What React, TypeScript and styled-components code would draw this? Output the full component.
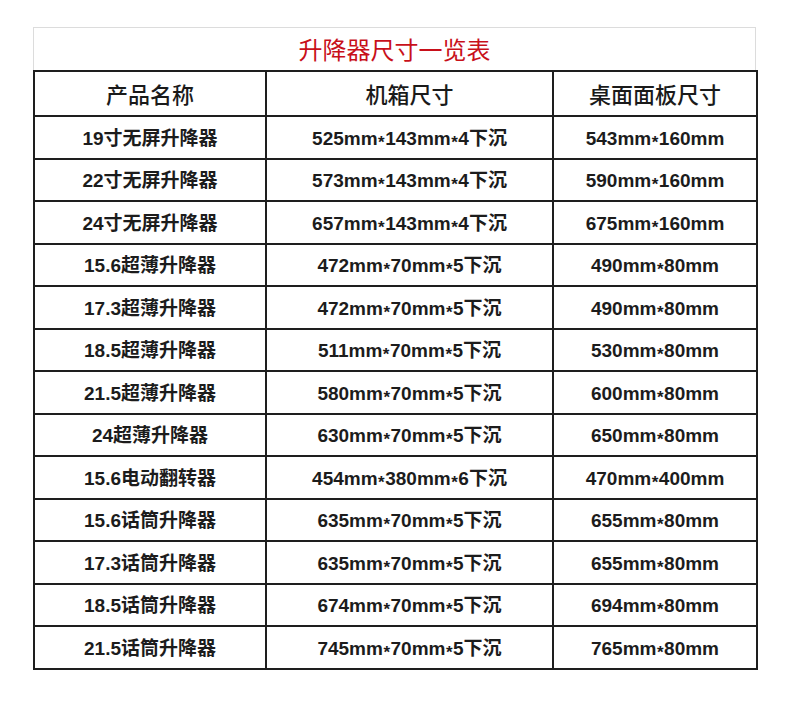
import React from "react";
import styled, { createGlobalStyle } from "styled-components";

const GlobalStyle = createGlobalStyle`
  html, body {
    margin: 0;
    padding: 0;
    background: #ffffff;
  }
  body {
    font-family: "Liberation Sans", "Noto Sans CJK SC", sans-serif;
    color: #1a1a1a;
  }
`;

const Page = styled.div`
  width: 790px;
  height: 717px;
  box-sizing: border-box;
  padding: 27px 0 0 33px;
`;

const Sheet = styled.div`
  width: 723px;
  display: flex;
  flex-direction: column;
`;

const TitleBar = styled.div`
  height: 43px;
  box-sizing: border-box;
  border: 1px solid #dcdcdc;
  border-bottom: none;
  display: flex;
  align-items: center;
  justify-content: center;
  color: #c8101a;
  font-family: "Noto Sans CJK SC", sans-serif;
  font-size: 24px;
  font-weight: 400;
  padding-bottom: 2px;
`;

const Table = styled.table`
  width: 723px;
  border-collapse: collapse;
  table-layout: fixed;
`;

const Col = styled.col<{ $w: number }>`
  width: ${(p) => p.$w}px;
`;

const HeadCell = styled.th`
  height: 41px;
  border: 2px solid #1e1e1e;
  font-family: "Noto Sans CJK SC", sans-serif;
  font-size: 22px;
  font-weight: 500;
  text-align: center;
  vertical-align: middle;
  padding: 0 0 2px 0;
  color: #1a1a1a;
`;

const Row = styled.tr`
  height: 42.5px;
`;

const Cell = styled.td`
  border: 2px solid #1e1e1e;
  font-family: "Liberation Sans", "Noto Sans CJK SC", sans-serif;
  font-size: 19px;
  line-height: 24px;
  font-weight: 700;
  text-align: center;
  vertical-align: middle;
  padding: 3px 0 0 0;
  color: #1c1c1c;
  white-space: nowrap;
`;

const Star = styled.span`
  display: inline-block;
  font-size: 17px;
  line-height: 10px;
  vertical-align: -3px;
  margin: 0 0.5px;
`;

const rows: [string, string, string][] = [
  ["19寸无屏升降器", "525mm*143mm*4下沉", "543mm*160mm"],
  ["22寸无屏升降器", "573mm*143mm*4下沉", "590mm*160mm"],
  ["24寸无屏升降器", "657mm*143mm*4下沉", "675mm*160mm"],
  ["15.6超薄升降器", "472mm*70mm*5下沉", "490mm*80mm"],
  ["17.3超薄升降器", "472mm*70mm*5下沉", "490mm*80mm"],
  ["18.5超薄升降器", "511mm*70mm*5下沉", "530mm*80mm"],
  ["21.5超薄升降器", "580mm*70mm*5下沉", "600mm*80mm"],
  ["24超薄升降器", "630mm*70mm*5下沉", "650mm*80mm"],
  ["15.6电动翻转器", "454mm*380mm*6下沉", "470mm*400mm"],
  ["15.6话筒升降器", "635mm*70mm*5下沉", "655mm*80mm"],
  ["17.3话筒升降器", "635mm*70mm*5下沉", "655mm*80mm"],
  ["18.5话筒升降器", "674mm*70mm*5下沉", "694mm*80mm"],
  ["21.5话筒升降器", "745mm*70mm*5下沉", "765mm*80mm"],
];

function Dim({ text }: { text: string }) {
  const parts = text.split("*");
  return (
    <>
      {parts.map((p, i) => (
        <React.Fragment key={i}>
          {i > 0 && <Star>*</Star>}
          {p}
        </React.Fragment>
      ))}
    </>
  );
}

export default function App() {
  return (
    <>
      <GlobalStyle />
      <Page>
        <Sheet>
          <TitleBar>升降器尺寸一览表</TitleBar>
          <Table>
            <colgroup>
              <Col $w={232} />
              <Col $w={287} />
              <Col $w={204} />
            </colgroup>
            <thead>
              <tr>
                <HeadCell>产品名称</HeadCell>
                <HeadCell>机箱尺寸</HeadCell>
                <HeadCell>桌面面板尺寸</HeadCell>
              </tr>
            </thead>
            <tbody>
              {rows.map((r) => (
                <Row key={r[0]}>
                  <Cell>{r[0]}</Cell>
                  <Cell>
                    <Dim text={r[1]} />
                  </Cell>
                  <Cell>
                    <Dim text={r[2]} />
                  </Cell>
                </Row>
              ))}
            </tbody>
          </Table>
        </Sheet>
      </Page>
    </>
  );
}
